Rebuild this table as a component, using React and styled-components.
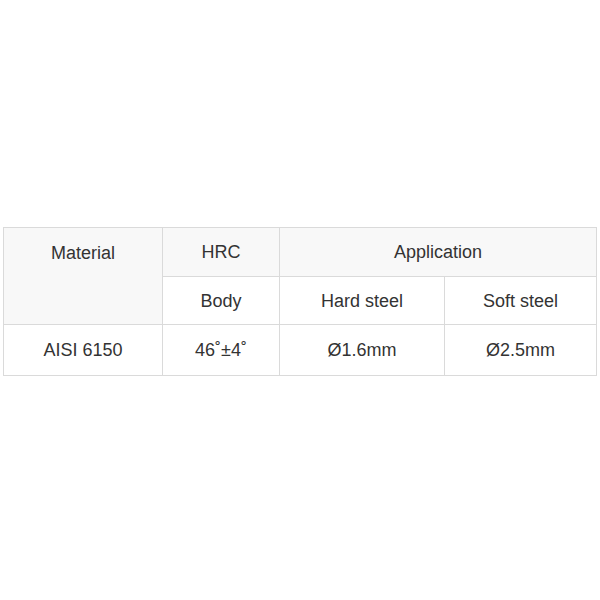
import React from 'react';
import styled, {createGlobalStyle} from 'styled-components';

const GlobalStyle = createGlobalStyle`
  body {
    margin: 0;
    background: #fff;
    font-family: "Liberation Sans", Arial, sans-serif;
  }
`

const Page = styled.div`
  width: 600px;
  height: 600px;
  display: flex;
  align-items: center;
  padding: 3px 4px 0 3px;
  box-sizing: border-box;
`

const Table = styled.table`
  width: 593px;
  border-collapse: collapse;
  table-layout: fixed;
  border: 1px solid #dadada;
  color: #333;
  font-size: 18px;
`

const Row = styled.tr`
  height: ${p => p.$h}px;
`

const Cell = styled.td`
  border: 1px solid #dadada;
  text-align: center;
  vertical-align: ${p => (p.$top ? 'top' : 'middle')};
  padding: ${p => (p.$top ? '14px 0 0' : '0')};
  background: ${p => (p.$head ? '#f8f8f8' : '#fff')};
  line-height: 22px;
`

const cols = [159, 117, 165, 152];

const App = () => {
  return (
    <Page>
      <GlobalStyle />
      <Table>
        <colgroup>
          {cols.map((w, i) => <col key={i} style={{width: w}} />)}
        </colgroup>
        <tbody>
          <Row $h={49}>
            <Cell $head $top rowSpan={2}>Material</Cell>
            <Cell $head>HRC</Cell>
            <Cell $head colSpan={2}>Application</Cell>
          </Row>
          <Row $h={48}>
            <Cell>Body</Cell>
            <Cell>Hard steel</Cell>
            <Cell>Soft steel</Cell>
          </Row>
          <Row $h={51}>
            <Cell>AISI 6150</Cell>
            <Cell>46˚±4˚</Cell>
            <Cell>Ø1.6mm</Cell>
            <Cell>Ø2.5mm</Cell>
          </Row>
        </tbody>
      </Table>
    </Page>
  );
};

export default App;
